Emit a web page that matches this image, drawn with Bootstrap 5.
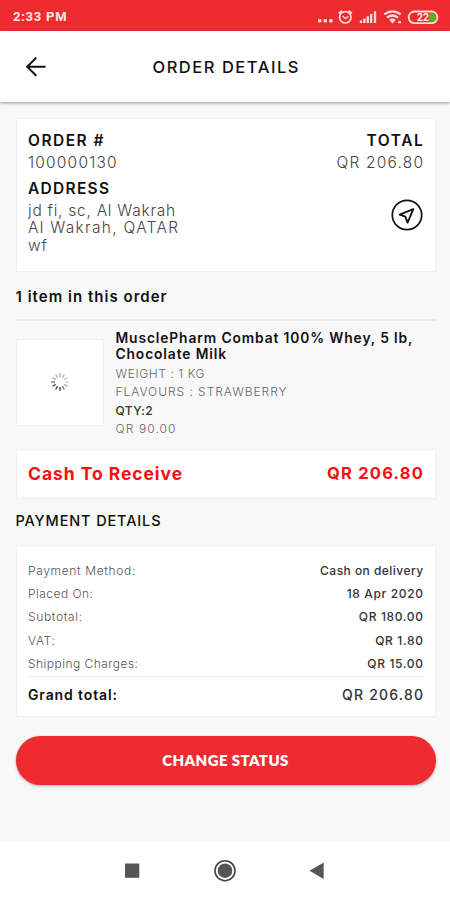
<!DOCTYPE html>
<html lang="en">
<head>
<meta charset="utf-8">
<meta name="viewport" content="width=device-width, initial-scale=1">
<title>Order Details</title>
<link href="https://cdn.jsdelivr.net/npm/bootstrap@5.3.0/dist/css/bootstrap.min.css" rel="stylesheet">
<script src="https://cdn.jsdelivr.net/npm/bootstrap@5.3.0/dist/js/bootstrap.bundle.min.js"></script>
<style>
body{font-family:Inter,"Liberation Sans",sans-serif;background:#f8f8f8;color:#111;height:900px;overflow:hidden;white-space:nowrap}
svg{display:block;flex:none}
.status-bar{height:31px;background:#ee2c30;padding:2px 11px 0 13px;font:700 13px Roboto,sans-serif;letter-spacing:.75px;color:#ffe9e9}
.app-bar{height:71px;background:#fff;box-shadow:0 1px 3px rgba(0,0,0,.42)}
.app-title{font-size:16.5px;font-weight:500;letter-spacing:1.53px;line-height:24px;margin-right:-2.5px}
.page-body{padding:16px 14.5px 0 15.5px}
.panel{background:#fff;border:1px solid #efefef;border-radius:0}
.pad-x{padding-left:11.5px;padding-right:11.5px}
.order-panel{padding-top:11px;padding-bottom:17px}
.label{font-size:15.5px;line-height:22px;font-weight:600;letter-spacing:1.5px}
.label-address{letter-spacing:1.28px;margin-top:4px}
.value{font-size:15.5px;line-height:22px;font-weight:300;letter-spacing:1.2px;color:#444}
.address{font-size:15.5px;line-height:17.3px;font-weight:300;letter-spacing:.75px;margin-top:2px;color:#444}
.address .city{letter-spacing:1.3px}
.trim-end{margin-right:-1.2px}
.locate{margin-top:25px}
.items-title{font-size:15px;font-weight:600;line-height:22px;letter-spacing:1.02px;margin-top:14px}
.rule-items{height:2px;background:#e9e9e9;margin-top:11px}
.product{margin-top:9px;height:109px;gap:12px}
.thumb{width:88px;height:87px;margin-top:9px}
.product-name{font-size:13.8px;line-height:16px;font-weight:600;letter-spacing:.88px;margin-bottom:3px}
.meta-line{font-size:12px;line-height:18.5px;font-weight:300;letter-spacing:.6px;color:#666}
.meta-flavour{letter-spacing:.96px}
.meta-qty{font-weight:500;letter-spacing:.4px;color:#333}
.meta-price{letter-spacing:1.1px}
.cash{height:50px;margin-top:10px;color:#fb0d12;font-weight:700;font-size:17.5px;letter-spacing:.94px}
.cash-sum{font-size:16.5px;letter-spacing:1.22px;margin-top:-2px}
.pay-title{font-size:14.5px;font-weight:500;line-height:22px;letter-spacing:.86px;margin-top:11px}
.pay-panel{margin-top:13px;padding-top:13px;padding-bottom:9px}
.pay-row{font-size:12px;line-height:23.2px;letter-spacing:.65px}
.pay-row .key{font-weight:300;color:#555}
.pay-row .amount{font-weight:500;color:#333;margin-right:-.6px}
.pay-row .tight{letter-spacing:.46px}
.total-row{border-top:1px solid #ececec;margin-top:1px;padding-top:6px;font-size:14px;line-height:24px}
.total-key{font-weight:600;letter-spacing:.88px}
.total-sum{font-weight:500;letter-spacing:1.21px;color:#333}
.status-btn,.status-btn:hover{background:#ee2c30;color:#fff;height:49px;margin-top:19.5px;padding:0 0 2px;font:800 15px Lato,sans-serif;letter-spacing:.39px;box-shadow:0 1px 3px rgba(0,0,0,.3)}
.system-nav{height:58px;background:#fff}
</style>
</head>
<body class="d-flex flex-column">
<div class="status-bar d-flex align-items-center justify-content-between">
  <span>2:33 PM</span>
  <svg width="122" height="20" viewBox="317 6 122 20" fill="none" stroke="#ffdcdc">
    <g fill="#ffdcdc" stroke="none"><rect x="318" y="18" width="3.4" height="3.4" rx="1"/><rect x="323.6" y="18" width="3.4" height="3.4" rx="1"/><rect x="329.2" y="18" width="3.4" height="3.4" rx="1"/></g>
    <circle cx="345.3" cy="16.3" r="5.7" stroke-width="1.6"/><path d="M342.7 15l2.7 2.6 3-2.4" stroke-width="1.3"/><path d="M338.8 12.6l3.2-2.8M351.8 12.6l-3.2-2.8" stroke-width="2"/>
    <path d="M361 22v-2.5M364.4 22v-4.5M367.8 22v-6.7M371.2 22v-9M375 22V10.2" stroke-width="2.3"/>
    <path d="M384.3 13.4q8.2-6.2 16.4 0M387 16.6q5.5-4.2 11 0" stroke-width="2.2"/><path d="M389.2 18.8q3.3-2.4 6.6 0l-3.3 3.8z" fill="#ffdcdc" stroke="none"/><path d="M398 21.200h3" stroke-width="2"/>
    <rect x="408.700" y="10.500" width="28.600" height="11.700" rx="5.800" stroke-width="1.800"/><path d="M429 12.200h3a4 4 0 010 8.300h-3z" fill="#43bd19" stroke="none"/>
    <text x="417" y="20" fill="#ffe9e9" stroke="none" font-family="Roboto" font-size="10.5" font-weight="700" letter-spacing="0">22</text>
  </svg>
</div>
<header class="app-bar position-relative d-flex align-items-center justify-content-center">
  <svg class="position-absolute start-0 ms-4" width="24" height="24" viewBox="24 55 24 24" fill="none" stroke="#111" stroke-width="2"><path d="M45.500 66.700H27.300M36.300 57.600l-9.100 9.100 9.100 9.100"/></svg>
  <span class="app-title">ORDER DETAILS</span>
</header>
<main class="page-body flex-grow-1">
  <section class="panel pad-x order-panel d-flex justify-content-between">
    <div>
      <div class="label">ORDER #</div>
      <div class="value">100000130</div>
      <div class="label label-address">ADDRESS</div>
      <div class="address">jd fi, sc, Al Wakrah<br><span class="city">Al Wakrah, QATAR</span><br>wf</div>
    </div>
    <div class="d-flex flex-column align-items-end">
      <div class="label trim-end">TOTAL</div>
      <div class="value trim-end">QR 206.80</div>
      <svg class="locate" width="32" height="32" viewBox="0 0 32 32" fill="none" stroke="#111"><circle cx="16" cy="16" r="14.700" stroke-width="1.700"/><path d="M22.300 10.200L8.700 15.700l5.600 1.900 2.300 6z" stroke-width="1.900" stroke-linejoin="round"/></svg>
    </div>
  </section>
  <h2 class="items-title mb-0">1 item in this order</h2>
  <div class="rule-items"></div>
  <section class="product d-flex">
    <div class="panel thumb d-flex align-items-center justify-content-center">
      <svg width="20" height="20" viewBox="-10 -10 20 20" stroke="#333" stroke-width="1.300"><path d="M0 5v3.700"/><path d="M-2.500 4.300l-1.800 3.200"/><path d="M-4.300 2.500l-3.200 1.800"/><path d="M-5 0h-3.700" opacity=".75"/><path d="M-4.300-2.500l-3.200-1.800" opacity=".5"/><path d="M-2.500-4.300l-1.800-3.200" opacity=".4"/><path d="M0-5v-3.700" opacity=".4"/><path d="M2.500-4.300l1.800-3.200" opacity=".4"/><path d="M4.300-2.500l3.200-1.800" opacity=".35"/><path d="M5 0h3.700" opacity=".2"/><path d="M4.300 2.500l3.200 1.800" opacity=".5"/><path d="M2.500 4.300l1.800 3.200" opacity=".7"/></svg>
    </div>
    <div>
      <div class="product-name">MusclePharm Combat 100% Whey, 5 lb,<br>Chocolate Milk</div>
      <div class="meta-line">WEIGHT : 1 KG</div>
      <div class="meta-line meta-flavour">FLAVOURS : STRAWBERRY</div>
      <div class="meta-line meta-qty">QTY:2</div>
      <div class="meta-line meta-price">QR 90.00</div>
    </div>
  </section>
  <section class="panel pad-x cash d-flex align-items-center justify-content-between">
    <span>Cash To Receive</span><span class="cash-sum trim-end">QR 206.80</span>
  </section>
  <h2 class="pay-title mb-0">PAYMENT DETAILS</h2>
  <section class="panel pad-x pay-panel">
    <div class="pay-row d-flex justify-content-between"><span class="key">Payment Method:</span><span class="amount tight">Cash on delivery</span></div>
    <div class="pay-row d-flex justify-content-between"><span class="key tight">Placed On:</span><span class="amount">18 Apr 2020</span></div>
    <div class="pay-row d-flex justify-content-between"><span class="key">Subtotal:</span><span class="amount">QR 180.00</span></div>
    <div class="pay-row d-flex justify-content-between"><span class="key">VAT:</span><span class="amount">QR 1.80</span></div>
    <div class="pay-row d-flex justify-content-between"><span class="key tight">Shipping Charges:</span><span class="amount">QR 15.00</span></div>
    <div class="total-row d-flex justify-content-between"><span class="total-key">Grand total:</span><span class="total-sum trim-end">QR 206.80</span></div>
  </section>
  <button type="button" class="btn status-btn w-100 rounded-pill border-0">CHANGE STATUS</button>
</main>
<footer class="system-nav d-flex align-items-center justify-content-center">
  <svg width="204" height="26" viewBox="123 858 204 26" fill="#555"><rect x="125" y="863.500" width="14.300" height="14.300"/><circle cx="225" cy="870.700" r="10" fill="none" stroke="#444" stroke-width="1.600"/><circle cx="225" cy="870.700" r="7.300"/><path d="M309.500 870.700l14.200-8.200v16.400z"/></svg>
</footer>
</body>
</html>
